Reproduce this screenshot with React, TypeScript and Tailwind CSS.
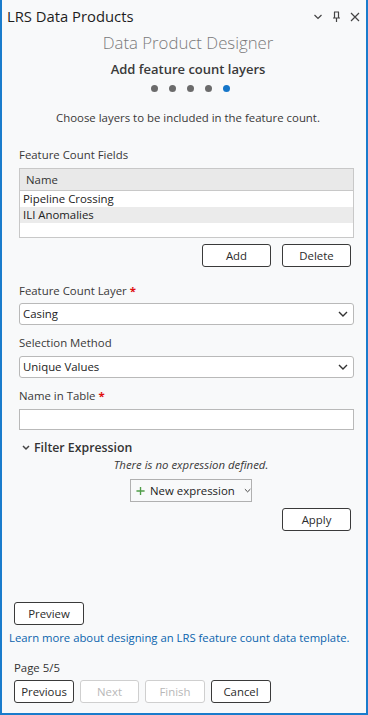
import React from "react";

const F = { fontFamily: '"Segoe UI", "Open Sans", "Noto Sans", sans-serif' };

function Chevron({ className = "" }: { className?: string }) {
  return (
    <svg width="10" height="6" viewBox="0 0 10 6" className={className}>
      <path d="M1 1 L5 5 L9 1" fill="none" stroke="#333" strokeWidth="1.4" />
    </svg>
  );
}

function Btn({ children, disabled = false, className = "" }: { children: React.ReactNode; disabled?: boolean; className?: string }) {
  return (
    <div
      className={`h-[23px] flex items-center justify-center rounded-[3px] border bg-white text-[11.4px] whitespace-nowrap ${
        disabled ? "border-[#cfcfcf] text-[#b8b8b8]" : "border-[#3a3a3a] text-[#2b2b2b]"
      } ${className}`}
    >
      {children}
    </div>
  );
}

function Select({ value }: { value: string }) {
  return (
    <div className="h-[22px] flex items-center justify-between rounded-[3px] border border-[#b9b9b9] bg-white pl-[3px] pr-[5px] text-[11.4px] text-[#222]">
      <span>{value}</span>
      <Chevron />
    </div>
  );
}

export default function App() {
  return (
    <div style={F} className="w-[368px] h-[715px] bg-[#f8f9fa] border-l-2 border-r-2 border-b-2 border-[#1a7ccc] flex flex-col text-[#383838]">
      {/* title bar */}
      <div className="h-[32px] flex items-center justify-between pl-[5px] pr-[6px] pt-[1px]">
        <span className="text-[14.8px] text-[#1e1e1e]">LRS Data Products</span>
        <div className="flex items-center gap-[9px] text-[#444]">
          <svg width="10" height="6" viewBox="0 0 10 6"><path d="M1.5 1 L5 4.5 L8.5 1" fill="none" stroke="#444" strokeWidth="1.2" /></svg>
          <svg width="9" height="12" viewBox="0 0 9 12"><path d="M2 1 H7 M2.5 1 V7 M6.5 1 V7 M1 7 H8 M4.5 7 V11" fill="none" stroke="#444" strokeWidth="1.2" /></svg>
          <svg width="10" height="10" viewBox="0 0 10 10"><path d="M1 1 L9 9 M9 1 L1 9" fill="none" stroke="#444" strokeWidth="1.2" /></svg>
        </div>
      </div>
      <div className="text-center pl-[8px] text-[16.8px] font-light text-[#7a7a7a] leading-[22px]">Data Product Designer</div>
      <div className="text-center pl-[8px] text-[13px] font-semibold text-[#3a3a3a] mt-[6px] leading-[18px]">Add feature count layers</div>
      <div className="flex justify-center gap-[11px] mt-[7px] pl-[12px]">
        {[0, 1, 2, 3].map((i) => (
          <div key={i} className="w-[7px] h-[7px] rounded-full bg-[#6b6b6b]" />
        ))}
        <div className="w-[7px] h-[7px] rounded-full bg-[#1576c9]" />
      </div>
      <div className="text-center pl-[8px] text-[11.4px] mt-[18px] leading-[16px]">Choose layers to be included in the feature count.</div>

      <div className="pl-[17px] pr-[12px]">
        <div className="text-[11.4px] mt-[21px] leading-[16px]">Feature Count Fields</div>
        <div className="mt-[5px] border border-[#c8c8c8] bg-white text-[11.4px] text-[#222]">
          <div className="h-[22px] bg-[#e9e9e9] border-b border-[#c8c8c8] flex items-center pl-[6px] text-[#333]">Name</div>
          <div className="h-[16px] flex items-center pl-[3px]">Pipeline Crossing</div>
          <div className="h-[16px] bg-[#ebebeb] flex items-center pl-[3px]">ILI Anomalies</div>
          <div className="h-[14px]" />
        </div>
        <div className="flex justify-end gap-[11px] mt-[6px] pr-[3px]">
          <Btn className="w-[69px]">Add</Btn>
          <Btn className="w-[69px]">Delete</Btn>
        </div>

        <div className="text-[11.4px] mt-[16px] leading-[16px]">
          Feature Count Layer <span className="text-[#e01010] font-bold">*</span>
        </div>
        <div className="mt-[4px]"><Select value="Casing" /></div>
        <div className="text-[11.4px] mt-[10px] leading-[16px]">Selection Method</div>
        <div className="mt-[5px]"><Select value="Unique Values" /></div>
        <div className="text-[11.4px] mt-[10px] leading-[16px]">
          Name in Table <span className="text-[#e01010] font-bold">*</span>
        </div>
        <div className="mt-[5px] h-[21px] border border-[#b9b9b9] bg-white" />

        <div className="flex items-center mt-[9px] text-[12.3px] font-semibold text-[#333] leading-[18px]">
          <svg width="8" height="6" viewBox="0 0 8 6" className="ml-[3px] mr-[4px]"><path d="M1 1 L4 4 L7 1" fill="none" stroke="#444" strokeWidth="1.5" /></svg>
          Filter Expression
        </div>
        <div className="text-center pl-[9px] text-[11.4px] italic leading-[16px]">There is no expression defined.</div>
        <div className="flex justify-center mt-[6px] pl-[9px]">
          <div className="h-[23px] w-[122px] flex items-center gap-[5px] border border-[#b0b0b0] bg-[#f8f9fa] pl-[5px] text-[11.4px] text-[#222] whitespace-nowrap">
            <svg width="10" height="10" viewBox="0 0 10 10"><path d="M5 0.5 V9.5 M0.5 5 H9.5" stroke="#4f9d48" strokeWidth="1.5" /></svg>
            <span>New expression</span>
            <svg width="8" height="5" viewBox="0 0 8 5" className="ml-[4px]"><path d="M1 1 L4 4 L7 1" fill="none" stroke="#444" strokeWidth="1.1" /></svg>
          </div>
        </div>
        <div className="flex justify-end mt-[6px] pr-[3px]">
          <Btn className="w-[69px]">Apply</Btn>
        </div>
      </div>

      <div className="flex-1" />
      <div className="px-[12px]">
        <Btn className="w-[70px]">Preview</Btn>
      </div>
      <div className="text-[11.3px] text-[#0b64ad] pl-[7px] mt-[5px] leading-[16px] whitespace-nowrap">Learn more about designing an LRS feature count data template.</div>
      <div className="text-[11.4px] pl-[12px] mt-[14px] leading-[16px] text-[#333]">Page 5/5</div>
      <div className="flex gap-[6px] px-[12px] mt-[4px] mb-[10px]">
        <Btn className="w-[60px]">Previous</Btn>
        <Btn disabled className="w-[59px]">Next</Btn>
        <Btn disabled className="w-[60px]">Finish</Btn>
        <Btn className="w-[60px]">Cancel</Btn>
      </div>
    </div>
  );
}
